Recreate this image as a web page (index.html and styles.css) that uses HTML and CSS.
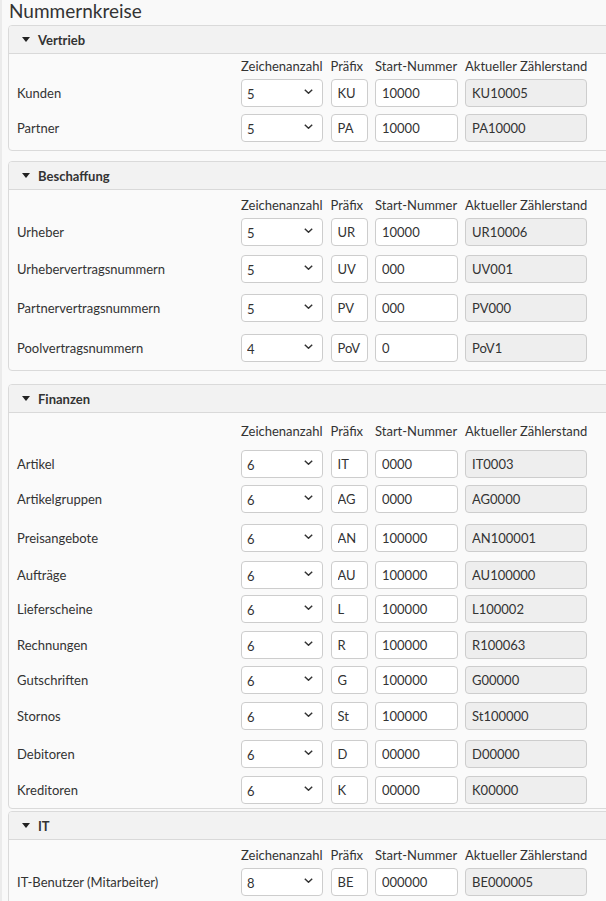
FILE: index.html
```html
<!DOCTYPE html>
<html lang="de">
<head>
<meta charset="utf-8">
<title>Nummernkreise</title>
<link rel="stylesheet" href="styles.css">
</head>
<body>
<h1 class="title">Nummernkreise</h1>

<section class="card">
  <div class="card-head"><svg class="caret" viewBox="0 0 8 5"><path d="M0 0H8L4 5Z"/></svg><span>Vertrieb</span></div>
  <div class="card-body pt4">
    <div class="grid colheads"><span></span><span>Zeichenanzahl</span><span>Präfix</span><span>Start-Nummer</span><span>Aktueller Zählerstand</span></div>
    <div class="grid row m5"><label>Kunden</label><div class="sel"><select><option>5</option></select><svg viewBox="0 0 9 5"><path d="M0.8 0.8L4.5 4.2L8.2 0.8"/></svg></div><input class="in" value="KU"><input class="in" value="10000"><input class="in ro" value="KU10005" readonly></div>
    <div class="grid row m7"><label>Partner</label><div class="sel"><select><option>5</option></select><svg viewBox="0 0 9 5"><path d="M0.8 0.8L4.5 4.2L8.2 0.8"/></svg></div><input class="in" value="PA"><input class="in" value="10000"><input class="in ro" value="PA10000" readonly></div>
  </div>
</section>

<section class="card mt10">
  <div class="card-head"><svg class="caret" viewBox="0 0 8 5"><path d="M0 0H8L4 5Z"/></svg><span>Beschaffung</span></div>
  <div class="card-body pt7">
    <div class="grid colheads"><span></span><span>Zeichenanzahl</span><span>Präfix</span><span>Start-Nummer</span><span>Aktueller Zählerstand</span></div>
    <div class="grid row m5"><label>Urheber</label><div class="sel"><select><option>5</option></select><svg viewBox="0 0 9 5"><path d="M0.8 0.8L4.5 4.2L8.2 0.8"/></svg></div><input class="in" value="UR"><input class="in" value="10000"><input class="in ro" value="UR10006" readonly></div>
    <div class="grid row m9"><label>Urhebervertragsnummern</label><div class="sel"><select><option>5</option></select><svg viewBox="0 0 9 5"><path d="M0.8 0.8L4.5 4.2L8.2 0.8"/></svg></div><input class="in" value="UV"><input class="in" value="000"><input class="in ro" value="UV001" readonly></div>
    <div class="grid row m11"><label>Partnervertragsnummern</label><div class="sel"><select><option>5</option></select><svg viewBox="0 0 9 5"><path d="M0.8 0.8L4.5 4.2L8.2 0.8"/></svg></div><input class="in" value="PV"><input class="in" value="000"><input class="in ro" value="PV000" readonly></div>
    <div class="grid row m12"><label>Poolvertragsnummern</label><div class="sel"><select><option>4</option></select><svg viewBox="0 0 9 5"><path d="M0.8 0.8L4.5 4.2L8.2 0.8"/></svg></div><input class="in" value="PoV"><input class="in" value="0"><input class="in ro" value="PoV1" readonly></div>
  </div>
</section>

<section class="card mt13">
  <div class="card-head"><svg class="caret" viewBox="0 0 8 5"><path d="M0 0H8L4 5Z"/></svg><span>Finanzen</span></div>
  <div class="card-body pt10 pb4">
    <div class="grid colheads"><span></span><span>Zeichenanzahl</span><span>Präfix</span><span>Start-Nummer</span><span>Aktueller Zählerstand</span></div>
    <div class="grid row m11"><label>Artikel</label><div class="sel"><select><option>6</option></select><svg viewBox="0 0 9 5"><path d="M0.8 0.8L4.5 4.2L8.2 0.8"/></svg></div><input class="in" value="IT"><input class="in" value="0000"><input class="in ro" value="IT0003" readonly></div>
    <div class="grid row m7"><label>Artikelgruppen</label><div class="sel"><select><option>6</option></select><svg viewBox="0 0 9 5"><path d="M0.8 0.8L4.5 4.2L8.2 0.8"/></svg></div><input class="in" value="AG"><input class="in" value="0000"><input class="in ro" value="AG0000" readonly></div>
    <div class="grid row m11"><label>Preisangebote</label><div class="sel"><select><option>6</option></select><svg viewBox="0 0 9 5"><path d="M0.8 0.8L4.5 4.2L8.2 0.8"/></svg></div><input class="in" value="AN"><input class="in" value="100000"><input class="in ro" value="AN100001" readonly></div>
    <div class="grid row m9"><label>Aufträge</label><div class="sel"><select><option>6</option></select><svg viewBox="0 0 9 5"><path d="M0.8 0.8L4.5 4.2L8.2 0.8"/></svg></div><input class="in" value="AU"><input class="in" value="100000"><input class="in ro" value="AU100000" readonly></div>
    <div class="grid row m6"><label>Lieferscheine</label><div class="sel"><select><option>6</option></select><svg viewBox="0 0 9 5"><path d="M0.8 0.8L4.5 4.2L8.2 0.8"/></svg></div><input class="in" value="L"><input class="in" value="100000"><input class="in ro" value="L100002" readonly></div>
    <div class="grid row m8"><label>Rechnungen</label><div class="sel"><select><option>6</option></select><svg viewBox="0 0 9 5"><path d="M0.8 0.8L4.5 4.2L8.2 0.8"/></svg></div><input class="in" value="R"><input class="in" value="100000"><input class="in ro" value="R100063" readonly></div>
    <div class="grid row m7"><label>Gutschriften</label><div class="sel"><select><option>6</option></select><svg viewBox="0 0 9 5"><path d="M0.8 0.8L4.5 4.2L8.2 0.8"/></svg></div><input class="in" value="G"><input class="in" value="100000"><input class="in ro" value="G00000" readonly></div>
    <div class="grid row m8"><label>Stornos</label><div class="sel"><select><option>6</option></select><svg viewBox="0 0 9 5"><path d="M0.8 0.8L4.5 4.2L8.2 0.8"/></svg></div><input class="in" value="St"><input class="in" value="100000"><input class="in ro" value="St100000" readonly></div>
    <div class="grid row m10"><label>Debitoren</label><div class="sel"><select><option>6</option></select><svg viewBox="0 0 9 5"><path d="M0.8 0.8L4.5 4.2L8.2 0.8"/></svg></div><input class="in" value="D"><input class="in" value="00000"><input class="in ro" value="D00000" readonly></div>
    <div class="grid row m8"><label>Kreditoren</label><div class="sel"><select><option>6</option></select><svg viewBox="0 0 9 5"><path d="M0.8 0.8L4.5 4.2L8.2 0.8"/></svg></div><input class="in" value="K"><input class="in" value="00000"><input class="in ro" value="K00000" readonly></div>
  </div>
</section>

<section class="card mt2">
  <div class="card-head"><svg class="caret" viewBox="0 0 8 5"><path d="M0 0H8L4 5Z"/></svg><span>IT</span></div>
  <div class="card-body pt7">
    <div class="grid colheads"><span></span><span>Zeichenanzahl</span><span>Präfix</span><span>Start-Nummer</span><span>Aktueller Zählerstand</span></div>
    <div class="grid row m5"><label>IT-Benutzer (Mitarbeiter)</label><div class="sel"><select><option>8</option></select><svg viewBox="0 0 9 5"><path d="M0.8 0.8L4.5 4.2L8.2 0.8"/></svg></div><input class="in" value="BE"><input class="in" value="000000"><input class="in ro" value="BE000005" readonly></div>
  </div>
</section>
</body>
</html>
```

FILE: styles.css
```css
html {
  overflow: hidden;
  background: #f9f9f9;
}

body {
  margin: 0;
  padding: 0 0 40px 6px;
  border-left: 2px solid #ebebeb;
  background: #f9f9f9;
  font-family: Lato, "Noto Sans", sans-serif;
  font-size: 13px;
  color: #333;
  min-height: 901px;
}

.title {
  margin: 0 0 3px 0;
  padding-left: 1px;
  font-size: 19px;
  line-height: 22px;
  font-weight: 400;
  color: #333;
}

.card {
  width: 640px;
  border: 1px solid #dadada;
  border-radius: 4px;
  background: #fafafa;
  overflow: hidden;
}

.mt2 { margin-top: 2px; }
.mt10 { margin-top: 10px; }
.mt13 { margin-top: 13px; }

.card-head {
  height: 27px;
  display: flex;
  align-items: center;
  gap: 8px;
  padding-left: 13px;
  background: #f2f2f2;
  border-bottom: 1px solid #d9d9d9;
  font-weight: 700;
  font-size: 13px;
  color: #333;
}

.caret {
  width: 8px;
  height: 5px;
  fill: #222;
}

.card-body {
  padding: 4px 8px 8px 8px;
}

.pt4 { padding-top: 4px; }
.pt7 { padding-top: 7px; }
.pt10 { padding-top: 10px; }
.pb4 { padding-bottom: 4px; }

.grid {
  display: grid;
  grid-template-columns: 216.5px 82px 37px 82.5px 122px;
  column-gap: 7.5px;
}

.colheads {
  line-height: 16px;
  white-space: nowrap;
}

.row {
  align-items: center;
  height: 28px;
}

.m5 { margin-top: 5px; }
.m6 { margin-top: 6px; }
.m7 { margin-top: 7px; }
.m8 { margin-top: 8px; }
.m9 { margin-top: 9px; }
.m10 { margin-top: 10px; }
.m11 { margin-top: 11px; }
.m12 { margin-top: 12px; }

.row label {
  white-space: nowrap;
}

.in,
.sel select {
  box-sizing: border-box;
  width: 100%;
  height: 28px;
  margin: 0;
  padding: 0 6px;
  border: 1px solid #cdcdcd;
  border-radius: 4px;
  background: #fff;
  font-family: inherit;
  font-size: 13px;
  color: #333;
  outline: none;
}

.in.ro {
  background: #eeeeee;
}

.sel {
  position: relative;
  height: 28px;
}

.sel select {
  -webkit-appearance: none;
  appearance: none;
  padding-left: 5px;
  padding-top: 2px;
}

.sel svg {
  position: absolute;
  right: 10px;
  top: 10px;
  width: 9px;
  height: 5px;
  fill: none;
  stroke: #333;
  stroke-width: 1.5;
  pointer-events: none;
}
```
